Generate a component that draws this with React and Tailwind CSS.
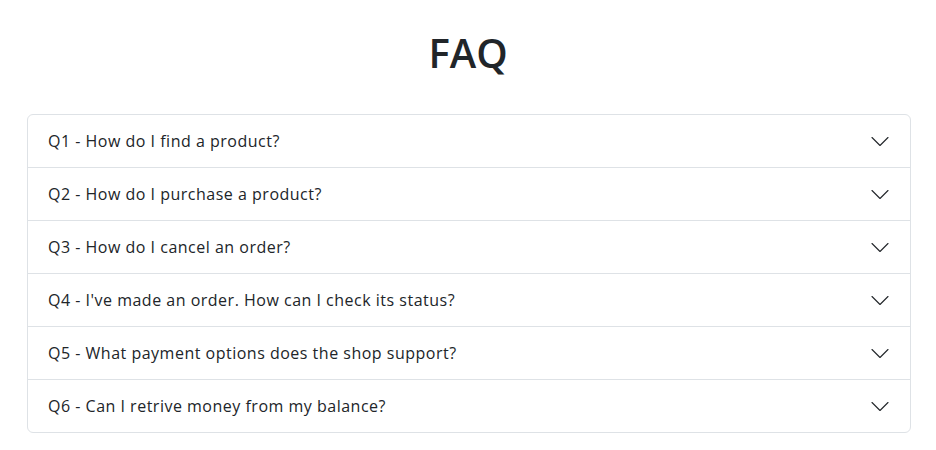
import React from "react";

const questions = [
  "Q1 - How do I find a product?",
  "Q2 - How do I purchase a product?",
  "Q3 - How do I cancel an order?",
  "Q4 - I've made an order. How can I check its status?",
  "Q5 - What payment options does the shop support?",
  "Q6 - Can I retrive money from my balance?",
];

function Chevron() {
  return (
    <svg width="20" height="20" viewBox="0 0 20 20" className="shrink-0">
      <path
        d="M2 6.5L10 14.5L18 6.5"
        fill="none"
        stroke="#212529"
        strokeWidth="1.1"
        strokeLinecap="round"
        strokeLinejoin="round"
      />
    </svg>
  );
}

export default function App() {
  return (
    <div
      className="min-h-[450px] bg-white text-[#212529]"
      style={{ fontFamily: '"Open Sans", sans-serif' }}
    >
      <h1 className="pt-[29px] pb-[37px] text-center text-[40px] font-semibold leading-[48px]">
        FAQ
      </h1>
      <div className="ml-[27px] w-[884px] rounded-[6px] border border-[#dee2e6]">
        {questions.map((q, i) => (
          <button
            key={i}
            className={
              "flex h-[52px] w-full items-center justify-between px-5 text-left text-base leading-6 tracking-[0.5px] " +
              (i > 0 ? "h-[53px] border-t border-[#dee2e6]" : "")
            }
          >
            <span>{q}</span>
            <Chevron />
          </button>
        ))}
      </div>
    </div>
  );
}
